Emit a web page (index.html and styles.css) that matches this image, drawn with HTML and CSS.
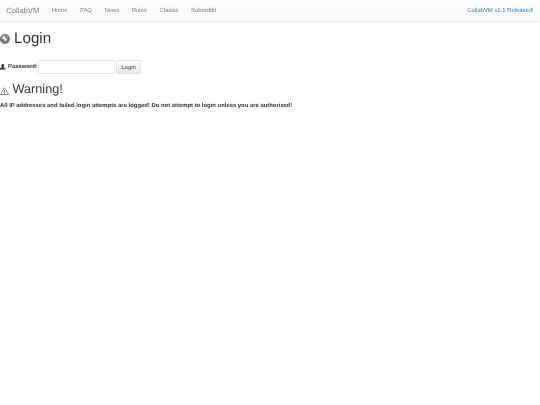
FILE: index.html
```html
<!DOCTYPE html>
<html lang="en">
<head>
<meta charset="utf-8">
<title>CollabVM - Login</title>
<link rel="stylesheet" href="styles.css">
</head>
<body>
<nav class="navbar">
  <a class="brand" href="#">CollabVM</a>
  <ul class="nav">
    <li><a href="#">Home</a></li>
    <li><a href="#">FAQ</a></li>
    <li><a href="#">News</a></li>
    <li><a href="#">Rules</a></li>
    <li><a href="#">Classic</a></li>
    <li><a href="#">Subreddit</a></li>
  </ul>
  <a class="release" href="#">CollabVM v1.1 Released!</a>
</nav>
<main>
  <h1 class="title">
    <svg class="icon globe" viewBox="0 0 20 20" aria-hidden="true">
      <circle cx="10" cy="10" r="10" fill="#777"/>
      <path d="M4 6l4-3 3 1-1 3 3 1 1 3-3 4-2-1v-3L5 10zM14 3l3 3-2 1z" fill="#e8e8e8"/>
    </svg>
    Login
  </h1>
  <form class="login">
    <label class="label" for="pw">
      <svg class="icon user" viewBox="0 0 12 12" aria-hidden="true">
        <path d="M6 0c1.900 0 3 1.400 3 3.200 0 1.300-.6 2.400-1.300 3v1.100L12 9v3H0V9l4.300-1.700V6.200c-.7-.6-1.300-1.700-1.300-3C3 1.400 4.100 0 6 0z" fill="#333"/>
      </svg>
      Password:
    </label>
    <input class="input" id="pw" type="password">
    <button class="btn" type="button">Login</button>
  </form>
  <h2 class="warning">
    <svg class="icon alert" viewBox="0 0 20 18" aria-hidden="true">
      <path d="M10 1.500 19 17H1z" fill="#fff" stroke="#777" stroke-width="2"/>
      <path d="M9 6.500h2v6H9zM9 13.500h2v2H9z" fill="#777"/>
    </svg>
    Warning!
  </h2>
  <p class="notice">All IP addresses and failed login attempts are logged! Do not attempt to login unless you are authorized!</p>
</main>
</body>
</html>
```
FILE: styles.css
```css
* { box-sizing: border-box; }
html, body { margin: 0; padding: 0; background: #fff; }
body {
  font-family: "Liberation Sans", Arial, sans-serif;
  font-size: 5.9px;
  color: #333;
  height: 405px;
  overflow: hidden;
  text-rendering: geometricPrecision;
  filter: blur(.25px);
}
a { text-decoration: none; }

.navbar {
  display: flex;
  align-items: center;
  height: 21.5px;
  padding: 0 6.3px;
  background: linear-gradient(#fff, #f8f8f8);
  border-bottom: 1px solid #eee;
  box-shadow: 0 1px 2px rgba(0,0,0,.05);
}
.brand { font-size: 7.6px; color: #777; margin-right: 6.3px; }
.nav { display: flex; list-style: none; margin: 0; padding: 0; }
.nav a { display: block; padding: 2px 6.3px 0; color: #777; }
.release { margin-left: auto; padding-top: 2px; color: #337ab7; }

main { display: block; }
.icon { display: inline-block; }

.title {
  display: flex;
  align-items: center;
  gap: 4px;
  margin: 8.5px 0 0;
  height: 17px;
  font-size: 15.2px;
  font-weight: 500;
  line-height: 17px;
}
.globe { width: 10px; height: 10px; margin-top: 1px; }

.login { display: flex; align-items: center; margin-top: 12.500px; height: 14.5px; }
.label { display: flex; align-items: center; gap: 2.5px; font-weight: 700; }
.user { width: 5.5px; height: 5.5px; }
.input {
  width: 77px;
  height: 14.5px;
  margin: 0 1px 0 0;
  padding: 0;
  background: #fff;
  border: 1px solid #e6e6e6;
  border-radius: 1.7px;
  box-shadow: inset 0 .5px .5px rgba(0,0,0,.05);
}
.btn {
  width: 25.5px;
  height: 14.5px;
  padding: 0;
  font: inherit;
  color: #333;
  background: linear-gradient(#fff, #e6e6e6);
  border: 1px solid #e2e2e2;
  border-radius: 1.7px;
}

.warning {
  display: flex;
  align-items: center;
  gap: 3.5px;
  margin: 8px 0 0;
  height: 15px;
  font-size: 12.7px;
  font-weight: 500;
  line-height: 15px;
}
.alert { width: 9px; height: 8px; margin-top: 2px; }

.notice { margin: 4.5px 0 0; font-weight: 700; line-height: 8px; }
```
